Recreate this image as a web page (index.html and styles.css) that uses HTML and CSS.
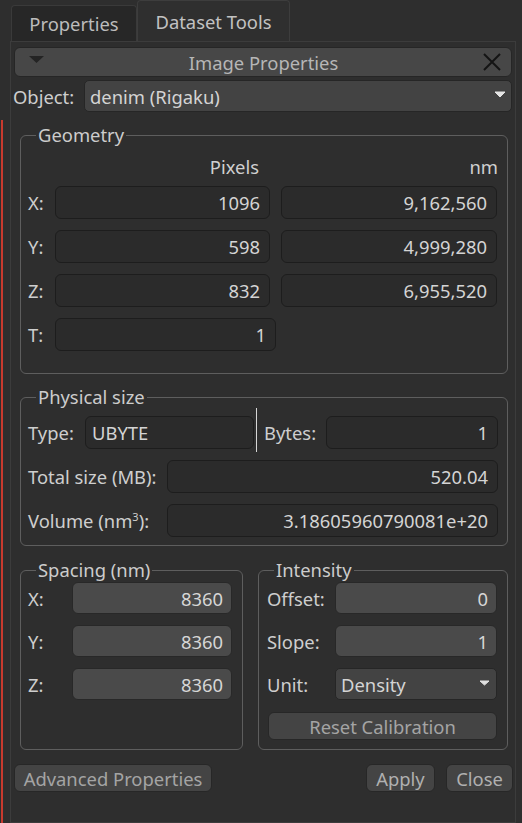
FILE: index.html
```html
<!DOCTYPE html>
<html>
<head>
<meta charset="utf-8">
<link rel="stylesheet" href="styles.css">
</head>
<body>
<div class="app">
  <div class="edge"><div class="stripe"></div></div>
  <div class="content">
    <div class="tabs">
      <div class="tab">Properties</div>
      <div class="tab active">Dataset Tools</div>
    </div>
    <div class="pane">
      <div class="header">
        <svg class="caret" width="15" height="7" viewBox="0 0 15 7"><path d="M0 0H15L7.5 7Z" fill="#242424"/></svg>
        <span class="header-title">Image Properties</span>
        <svg class="close" width="18" height="18" viewBox="0 0 18 18"><path d="M1 1L17 17M17 1L1 17" stroke="#141414" stroke-width="2"/></svg>
      </div>
      <div class="object-row">
        <span class="object-label">Object:</span>
        <div class="combo">
          <span class="combo-text">denim (Rigaku)</span>
          <svg class="combo-arrow" width="12" height="7" viewBox="0 0 12 7"><path d="M1 1H11L6 6Z" fill="#e4e4e4" stroke="#e4e4e4" stroke-linejoin="round"/></svg>
        </div>
      </div>

      <div class="groups">
        <fieldset class="group">
          <legend>Geometry</legend>
          <div class="geo">
            <div class="geo-head">
              <span class="ph-pixels">Pixels</span>
              <span class="ph-nm">nm</span>
            </div>
            <div class="geo-grid">
              <span class="lbl">X:</span><div class="field">1096</div><div class="field nm">9,162,560</div>
              <span class="lbl">Y:</span><div class="field">598</div><div class="field nm">4,999,280</div>
              <span class="lbl">Z:</span><div class="field">832</div><div class="field nm">6,955,520</div>
              <span class="lbl">T:</span><div class="field t-field">1</div><span></span>
            </div>
          </div>
        </fieldset>

        <fieldset class="group physical">
          <legend>Physical size</legend>
          <div class="cursor-line"></div>
          <div class="phys">
            <div class="prow">
              <span class="lbl type-lbl">Type:</span>
              <div class="field left type-field">UBYTE</div>
              <span class="lbl bytes-lbl">Bytes:</span>
              <div class="field grow">1</div>
            </div>
            <div class="prow">
              <span class="lbl size-lbl">Total size (MB):</span>
              <div class="field grow">520.04</div>
            </div>
            <div class="prow">
              <span class="lbl size-lbl">Volume (nm<sup>3</sup>):</span>
              <div class="field grow">3.18605960790081e+20</div>
            </div>
          </div>
        </fieldset>

        <div class="pair">
          <fieldset class="group spacing">
            <legend>Spacing (nm)</legend>
            <div class="spacing-in">
              <div class="srow"><span class="lbl sp-lbl">X:</span><div class="spin">8360</div></div>
              <div class="srow"><span class="lbl sp-lbl">Y:</span><div class="spin">8360</div></div>
              <div class="srow"><span class="lbl sp-lbl">Z:</span><div class="spin">8360</div></div>
            </div>
          </fieldset>
          <fieldset class="group intensity">
            <legend>Intensity</legend>
            <div class="intensity-in">
              <div class="srow"><span class="lbl in-lbl">Offset:</span><div class="spin">0</div></div>
              <div class="srow"><span class="lbl in-lbl">Slope:</span><div class="spin">1</div></div>
              <div class="srow"><span class="lbl in-lbl">Unit:</span>
                <div class="combo unit-combo">
                  <span class="combo-text">Density</span>
                  <svg class="unit-arrow" width="11" height="6" viewBox="0 0 11 6"><path d="M1 1H10L5.5 5Z" fill="#e0e0e0" stroke="#e0e0e0" stroke-linejoin="round"/></svg>
                </div>
              </div>
              <div class="btn reset">Reset Calibration</div>
            </div>
          </fieldset>
        </div>
      </div>

      <div class="actions">
        <div class="btn adv">Advanced Properties</div>
        <div class="spacer"></div>
        <div class="btn apply">Apply</div>
        <div class="btn closebtn">Close</div>
      </div>
    </div>
  </div>
</div>
</body>
</html>
```

FILE: styles.css
```css
* { box-sizing: border-box; }
html, body { margin: 0; padding: 0; }
body {
  background: #2e2e2e;
  font-family: "Noto Sans", "Open Sans", sans-serif;
  font-size: 18.4px;
  color: #d0d0d0;
  width: 522px;
  height: 823px;
  overflow: hidden;
}
.app { display: flex; height: 823px; }
.edge { width: 10px; flex: none; padding-top: 120px; }
.stripe { width: 2px; margin-left: 1px; height: 100%; background: #c83a2e; }
.content { width: 506px; flex: none; display: flex; flex-direction: column; }

.tabs { display: flex; align-items: flex-end; height: 41px; padding-left: 1px; flex: none; }
.tab {
  height: 36px;
  width: 126px;
  background: #272727;
  border: 1px solid #3a3a3a;
  border-bottom: none;
  border-radius: 4px 4px 0 0;
  color: #bcbcbc;
  display: flex;
  align-items: center;
  justify-content: center;
}
.tab.active { height: 41px; width: 153px; background: #2f2f2f; color: #c2c2c2; border-color: #3d3d3d; }

.pane {
  flex: 1;
  border: 1px solid #3c3c3c;
  padding: 5px 3px 0 3px;
  display: flex;
  flex-direction: column;
}

.header {
  height: 30px;
  flex: none;
  background: #474747;
  border: 1px solid #262626;
  border-radius: 6px;
  display: flex;
  align-items: center;
  padding: 0 10px 0 14px;
}
.caret { flex: none; margin-bottom: 5px; }
.header-title { flex: 1; text-align: center; color: #b6b6b6; }
.close { flex: none; }

.object-row { display: flex; align-items: center; margin-top: 3px; height: 32px; flex: none; }
.object-label { width: 71px; margin-left: -1px; color: #cecece; }
.combo {
  flex: 1;
  height: 32px;
  background: #434343;
  border: 1px solid #262626;
  border-radius: 5px;
  display: flex;
  align-items: center;
  padding: 0 5px 0 5px;
  color: #d4d4d4;
}
.combo-text { flex: 1; }
.combo-arrow { flex: none; margin-bottom: 3px; }

.groups { margin: 0 4px 0 6px; display: flex; flex-direction: column; }
.group {
  margin: 13px 0 0 0;
  padding: 0;
  border: 1px solid #5e5e5e;
  border-radius: 6px;
  min-width: 0;
}
.group legend {
  margin-left: 15px;
  padding: 0 2px;
  line-height: 20px;
  height: 20px;
  color: #cccccc;
}

.lbl { color: #cecece; flex: none; }

.geo { padding: 9px 9px 22px 7px; }
.geo-head { display: flex; height: 24px; margin-bottom: 8px; padding-left: 27px; }
.ph-pixels { width: 215px; text-align: right; padding-right: 11px; }
.ph-nm { flex: 1; text-align: right; }
.geo-grid { display: grid; grid-template-columns: 27px 215px 227px; row-gap: 11px; align-items: center; }
.field {
  height: 33px;
  background: #2b2b2b;
  border: 1px solid #1d1d1d;
  border-radius: 6px;
  display: flex;
  align-items: center;
  justify-content: flex-end;
  padding: 0 9px;
  color: #d4d4d4;
}
.field.nm { margin-left: 11px; }
.t-field { width: 221px; }
.field.left { justify-content: flex-start; padding-left: 6px; }

.physical { position: relative; }
.cursor-line {
  position: absolute;
  left: 235px;
  top: 1px;
  width: 1px;
  height: 44px;
  background: #d6d6d6;
}
.phys { padding: 9px 9px 8px 7px; }
.prow { display: flex; align-items: center; height: 33px; }
.prow + .prow { margin-top: 11px; }
.type-lbl { width: 57px; }
.type-field { width: 169px; flex: none; }
.bytes-lbl { width: 62px; margin-left: 10px; }
.size-lbl { width: 139px; }
.field.grow { flex: 1; }
sup { font-size: 11px; line-height: 0; vertical-align: 7px; }

.pair { display: flex; margin-top: 14px; }
.pair .group { margin-top: 0; }
.spacing { width: 223px; flex: none; }
.intensity { flex: 1; margin-left: 15px !important; }
.spacing-in { padding: 2px 10px 9px 7px; }
.intensity-in { padding: 2px 10px 9px 8px; }
.srow { display: flex; align-items: center; height: 32px; }
.srow + .srow { margin-top: 11px; }
.sp-lbl { width: 44px; }
.in-lbl { width: 68px; }
.spin {
  flex: 1;
  height: 32px;
  background: #4a4a4a;
  border: 1px solid #282828;
  border-radius: 6px;
  display: flex;
  align-items: center;
  justify-content: flex-end;
  padding: 0 8px;
  color: #d6d6d6;
}
.unit-combo { padding: 0 6px 0 5px; }
.unit-arrow { flex: none; margin-bottom: 2px; }

.btn {
  height: 28px;
  background: #444444;
  border: 1px solid #272727;
  border-radius: 6px;
  display: flex;
  align-items: center;
  justify-content: center;
  color: #a4a4a4;
}
.reset { margin-top: 12px; margin-left: 1px; }

.actions { display: flex; margin-top: 14px; margin-right: -1px; flex: none; }
.adv { width: 198px; }
.spacer { flex: 1; }
.apply { width: 69px; color: #b0b0b0; }
.closebtn { width: 67px; margin-left: 11px; color: #b0b0b0; }
```
